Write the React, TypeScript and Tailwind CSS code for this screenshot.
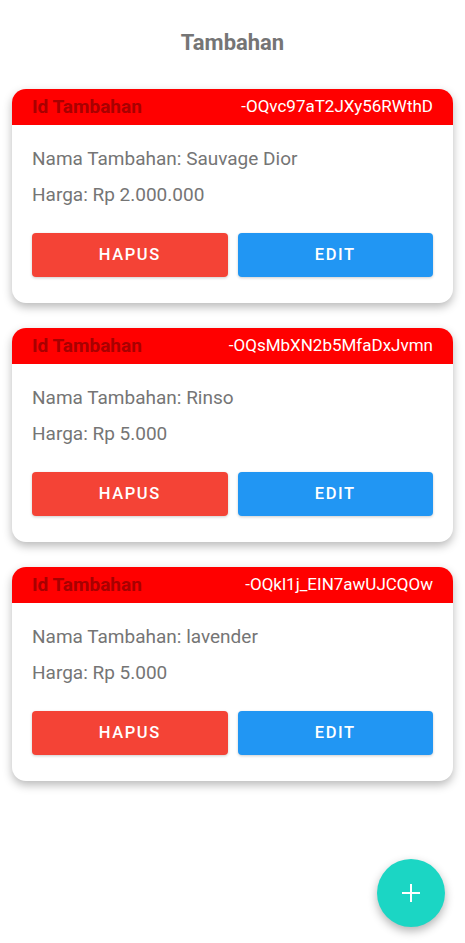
import React from "react";

const items = [
  { id: "-OQvc97aT2JXy56RWthD", name: "Sauvage Dior", price: "Rp 2.000.000" },
  { id: "-OQsMbXN2b5MfaDxJvmn", name: "Rinso", price: "Rp 5.000" },
  { id: "-OQkl1j_EIN7awUJCQOw", name: "lavender", price: "Rp 5.000" },
];

export default function App() {
  return (
    <div className="relative w-[465px] h-[943px] bg-white overflow-hidden" style={{ fontFamily: "Roboto, 'Noto Sans', sans-serif" }}>
      <div className="pt-[28px] h-[89px] text-center text-[22px] leading-[30px] font-bold text-[#757575]">Tambahan</div>
      <div className="flex flex-col gap-[25px] px-[12px]">
        {items.map((it) => (
          <div key={it.id} className="rounded-[14px] bg-white shadow-[0_4px_10px_rgba(0,0,0,0.28)] overflow-hidden">
            <div className="h-[36px] bg-[#ff0000] flex items-center justify-between pl-[20px] pr-[20px]">
              <span className="text-[19px] font-bold text-[#a80000]">Id Tambahan</span>
              <span className="text-[17px] text-white">{it.id}</span>
            </div>
            <div className="px-[20px] pt-[22px] pb-[26px]">
              <div className="text-[19px] leading-[24px] text-[#757575]">Nama Tambahan: {it.name}</div>
              <div className="mt-[12px] text-[19px] leading-[24px] text-[#757575]">Harga: {it.price}</div>
              <div className="mt-[26px] flex gap-[10px]">
                <button className="flex-1 h-[44px] rounded-[4px] bg-[#f44336] text-white text-[16.5px] font-medium tracking-[1.6px] shadow-[0_1px_3px_rgba(0,0,0,0.2)]">HAPUS</button>
                <button className="flex-1 h-[44px] rounded-[4px] bg-[#2196f3] text-white text-[16.5px] font-medium tracking-[1.6px] shadow-[0_1px_3px_rgba(0,0,0,0.2)]">EDIT</button>
              </div>
            </div>
          </div>
        ))}
      </div>
      <button className="absolute left-[377px] top-[859px] w-[68px] h-[68px] rounded-full bg-[#1bd6c4] shadow-[0_4px_10px_rgba(0,0,0,0.3)] flex items-center justify-center">
        <svg width="20" height="20" viewBox="0 0 20 20"><path d="M10 1v18M1 10h18" stroke="white" strokeWidth="2" /></svg>
      </button>
    </div>
  );
}
